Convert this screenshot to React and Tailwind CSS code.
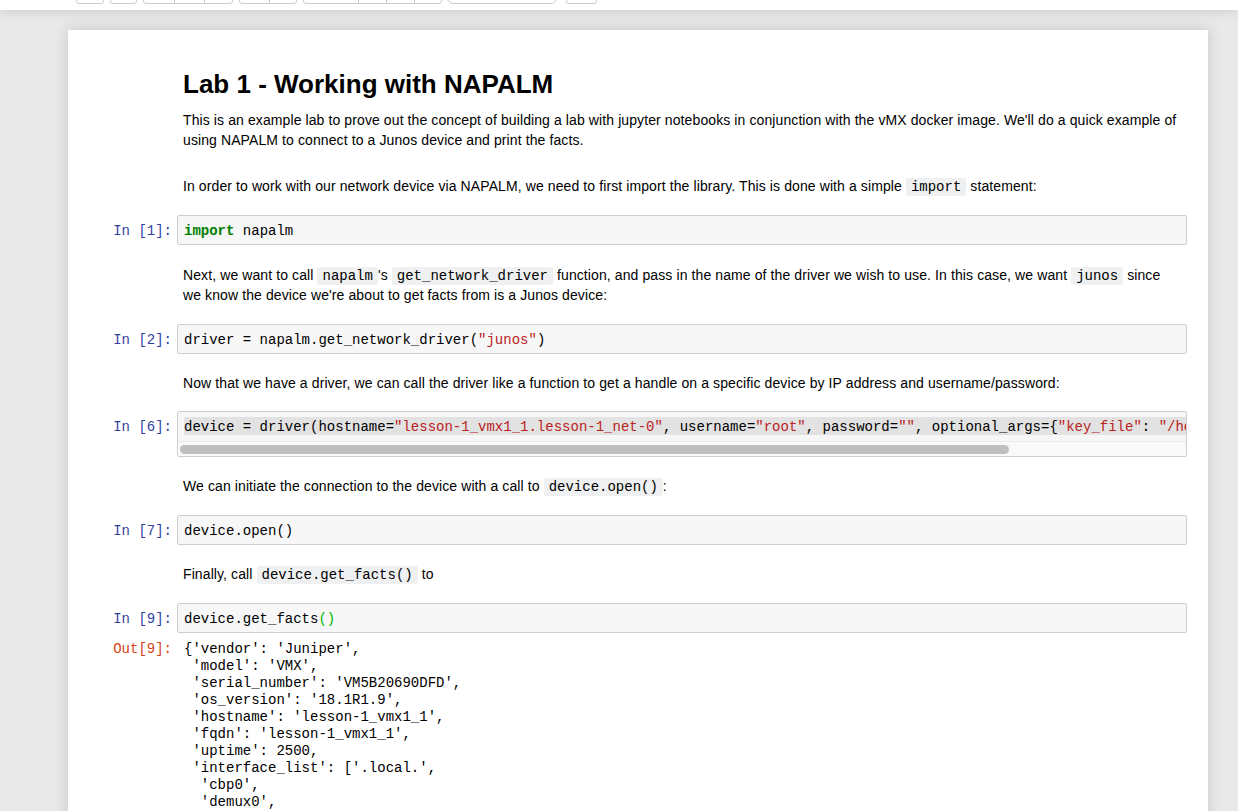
import React from "react";

const mono = { fontFamily: '"Liberation Mono", monospace' };

function Code({ children }) {
  return (
    <code
      className="bg-[#eff0f1] text-black px-[5px] py-[1px] rounded-[2px] text-[14px] leading-[16px] tracking-normal"
      style={mono}
    >
      {children}
    </code>
  );
}

function Prompt({ out, label }) {
  return (
    <div
      className={`w-[109px] shrink-0 pr-[5px] text-right text-[14px] leading-[17px] ${out ? "text-[#D84315]" : "text-[#303F9F]"}`}
      style={mono}
    >
      {label}
    </div>
  );
}

function CodeCell({ n, children, mt }) {
  return (
    <div className={`flex ${mt}`}>
      <div className="pt-[8px]">
        <Prompt label={`In [${n}]:`} />
      </div>
      <div
        className="w-[1010px] h-[30px] flex items-center pt-[2px] px-[6px] bg-[#f7f7f7] border border-[#cfcfcf] rounded-[2px] text-[14px] leading-[17px] text-black whitespace-pre overflow-hidden"
        style={mono}
      >
        {children}
      </div>
    </div>
  );
}

function Md({ children, mt }) {
  return (
    <div className={`flex ${mt}`}>
      <div className="w-[109px] shrink-0" />
      <div className="w-[1010px] px-[6px] text-[14px] leading-[20px] tracking-[0.1px] text-black">{children}</div>
    </div>
  );
}

function Btn({ w, rounded, cls = "" }) {
  return (
    <div
      className={`h-[30px] border border-[#cccccc] bg-white ${rounded ? "rounded-[6px]" : "rounded-[3px]"} ${cls}`}
      style={{ width: w }}
    />
  );
}

function Group({ widths, cls = "" }) {
  return (
    <div className={`flex h-[30px] border border-[#cccccc] bg-white rounded-[3px] ${cls}`}>
      {widths.map((w, i) => (
        <div key={i} className={`h-full ${i > 0 ? "border-l border-[#cccccc]" : ""}`} style={{ width: w }} />
      ))}
    </div>
  );
}

const S = ({ c }) => <span className="text-[#BA2121]">{c}</span>;

export default function App() {
  const out = [
    "{'vendor': 'Juniper',",
    " 'model': 'VMX',",
    " 'serial_number': 'VM5B20690DFD',",
    " 'os_version': '18.1R1.9',",
    " 'hostname': 'lesson-1_vmx1_1',",
    " 'fqdn': 'lesson-1_vmx1_1',",
    " 'uptime': 2500,",
    " 'interface_list': ['.local.',",
    "  'cbp0',",
    "  'demux0',",
    "  'dsc',",
  ];
  return (
    <div
      className="h-[811px] w-[1238px] overflow-hidden bg-[#e9e9e9]"
      style={{ fontFamily: '"Liberation Sans", Arial, sans-serif' }}
    >
      {/* header */}
      <div className="relative z-10 h-[10px] bg-white overflow-hidden shadow-[0_0_12px_1px_rgba(87,87,87,0.2)]">
        <div className="flex items-end h-[4px] overflow-visible">
          <div className="flex items-end pl-[76px] h-[30px] -mt-[26px]">
            <Btn w={28} />
            <Btn w={27} cls="ml-[6px]" />
            <Group widths={[30, 30, 28]} cls="ml-[6px]" />
            <Group widths={[29, 27]} cls="ml-[6px]" />
            <Group widths={[54, 28, 28, 27]} cls="ml-[6px]" />
            <Btn w={110} rounded cls="ml-[5px]" />
            <Btn w={31} cls="ml-[9px]" />
          </div>
        </div>
      </div>

      {/* notebook */}
      <div className="ml-[68px] mt-[20px] w-[1140px] h-[900px] bg-white shadow-[0_0_12px_1px_rgba(87,87,87,0.2)] pt-[38px]">
        <div className="flex">
          <div className="w-[109px] shrink-0" />
          <h1 className="px-[6px] text-[26px] leading-[32px] font-bold text-black">Lab 1 - Working with NAPALM</h1>
        </div>

        <Md mt="mt-[10px]">
          This is an example lab to prove out the concept of building a lab with jupyter notebooks in conjunction with the vMX docker image. We'll do a quick example of
          <br />
          using NAPALM to connect to a Junos device and print the facts.
        </Md>

        <Md mt="mt-[26px]">
          In order to work with our network device via NAPALM, we need to first import the library. This is done with a simple <Code>import</Code> statement:
        </Md>

        <CodeCell n={1} mt="mt-[19px]">
          <span className="text-[#008000] font-bold">import</span> napalm
        </CodeCell>

        <Md mt="mt-[20px]">
          Next, we want to call <Code>napalm</Code>'s <Code>get_network_driver</Code> function, and pass in the name of the driver we wish to use. In this case, we want <Code>junos</Code> since
          <br />
          we know the device we're about to get facts from is a Junos device:
        </Md>

        <CodeCell n={2} mt="mt-[19px]">
          driver = napalm.get_network_driver(<S c={'"junos"'} />)
        </CodeCell>

        <Md mt="mt-[19px]">
          Now that we have a driver, we can call the driver like a function to get a handle on a specific device by IP address and username/password:
        </Md>

        {/* cell 6 with scrollbar */}
        <div className="flex mt-[18px]">
          <div className="pt-[8px]">
            <Prompt label="In [6]:" />
          </div>
          <div className="w-[1010px] h-[46px] flex flex-col bg-[#f7f7f7] border border-[#cfcfcf] rounded-[2px] overflow-hidden">
            <div className="pt-[5px] pl-[6px]">
              <div
                className="h-[18px] flex items-center pt-[2px] bg-[#e2e2e2] text-[14px] leading-[17px] text-black whitespace-pre overflow-hidden"
                style={mono}
              >
                device = driver(hostname=<S c={'"lesson-1_vmx1_1.lesson-1_net-0"'} />, username=<S c={'"root"'} />, password=<S c={'""'} />, optional_args={"{"}<S c={'"key_file"'} />: <S c={'"/home/jupyter/.ssh/id_rsa"'} />{"})"}
              </div>
            </div>
            <div className="mt-[6px] flex-1 border-t border-[#ececec] bg-[#f9f9f9] px-[2px] pt-[3px]">
              <div className="h-[9px] w-[829px] rounded-full bg-[#bfbfbf]" />
            </div>
          </div>
        </div>

        <Md mt="mt-[19px]">
          We can initiate the connection to the device with a call to <Code>device.open()</Code>:
        </Md>

        <CodeCell n={7} mt="mt-[19px]">
          device.open()
        </CodeCell>

        <Md mt="mt-[19px]">
          Finally, call <Code>device.get_facts()</Code> to
        </Md>

        <CodeCell n={9} mt="mt-[19px]">
          device.get_facts<span className="text-[#00bb00]">()</span>
        </CodeCell>

        <div className="flex mt-[8px]">
          <Prompt out label="Out[9]:" />
          <div className="pl-[7px] text-[14px] leading-[17px] text-black whitespace-pre" style={mono}>
            {out.join("\n")}
          </div>
        </div>
      </div>
    </div>
  );
}
